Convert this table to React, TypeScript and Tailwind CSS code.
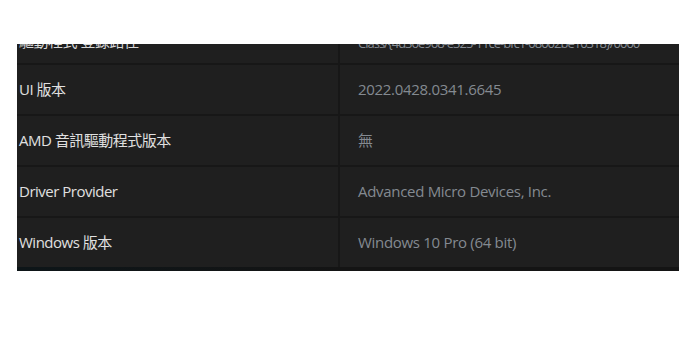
import React from "react";

const rows = [
  { label: "UI 版本", value: "2022.0428.0341.6645" },
  { label: "AMD 音訊驅動程式版本", value: "無" },
  { label: "Driver Provider", value: "Advanced Micro Devices, Inc." },
  { label: "Windows 版本", value: "Windows 10 Pro (64 bit)" },
];

const font = { fontFamily: '"Open Sans", "Noto Sans CJK TC", sans-serif' };

export default function App() {
  return (
    <div className="w-[696px] h-[356px] bg-white pt-[44px] pl-[17px]" style={font}>
      <div className="w-[662px] bg-[#1f1f1f] flex flex-col">
        <div className="h-[21px] overflow-hidden flex border-b-2 border-[#171717]">
          <div className="w-[323px] shrink-0 pl-[2px] border-r-2 border-[#171717] overflow-hidden">
            <div className="-mt-[13px] text-[15px] leading-[20px] text-[#d8d8d8] tracking-[-0.5px] whitespace-nowrap">驅動程式 登錄路徑</div>
          </div>
          <div className="flex-1 min-w-0 pl-[18px] overflow-hidden">
            <div className="-mt-[9px] text-[13px] leading-[16px] text-[#868c93] tracking-[-1px] whitespace-nowrap">
              Class/{"{4d36e968-e325-11ce-bfc1-08002be10318}"}/0000
            </div>
          </div>
        </div>
        {rows.map((r, i) => (
          <div
            key={i}
            className={
              i === rows.length - 1
                ? "h-[49px] flex"
                : "h-[51px] flex border-b-2 border-[#171717]"
            }
          >
            <div className="w-[323px] shrink-0 pl-[2px] border-r-2 border-[#171717] flex items-center">
              <span className="text-[15px] text-[#e0e0e0] tracking-[-0.5px] whitespace-nowrap">{r.label}</span>
            </div>
            <div className="flex-1 min-w-0 pl-[18px] flex items-center">
              <span className="text-[15px] text-[#848a91] tracking-[-0.3px] whitespace-nowrap">{r.value}</span>
            </div>
          </div>
        ))}
        <div className="h-[4px] bg-gradient-to-r from-[#0d1518] via-[#141414] to-[#141414]" />
      </div>
    </div>
  );
}
